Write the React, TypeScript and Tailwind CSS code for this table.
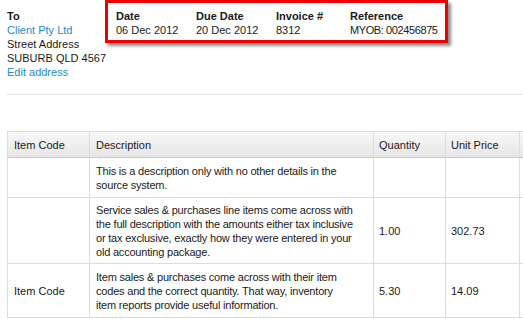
import React from 'react';

interface LineItem {
  code: string;
  description: React.ReactNode;
  quantity: string;
  unitPrice: string;
  height: string;
}

const items: LineItem[] = [
  {
    code: '',
    description: (
      <>
        This is a description only with no other details in the
        <br />
        source system.
      </>
    ),
    quantity: '',
    unitPrice: '',
    height: 'h-[40px]',
  },
  {
    code: '',
    description: (
      <>
        Service sales &amp; purchases line items come across with
        <br />
        the full description with the amounts either tax inclusive
        <br />
        or tax exclusive, exactly how they were entered in your
        <br />
        old accounting package.
      </>
    ),
    quantity: '1.00',
    unitPrice: '302.73',
    height: 'h-[66px]',
  },
  {
    code: 'Item Code',
    description: (
      <>
        Item sales &amp; purchases come across with their item
        <br />
        codes and the correct quantity. That way, inventory
        <br />
        item reports provide useful information.
      </>
    ),
    quantity: '5.30',
    unitPrice: '14.09',
    height: 'h-[54px]',
  },
];

const HeaderField = ({
  label,
  value,
  width,
  tight = false,
}: {
  label: string;
  value: string;
  width: string;
  tight?: boolean;
}) => (
  <div className={`${width} shrink-0 whitespace-nowrap`}>
    <div className="font-bold">{label}</div>
    <div className={tight ? 'tracking-[-0.4px]' : ''}>{value}</div>
  </div>
);

const cell = 'border border-[#dcdcdc] align-middle';

export default function App() {
  return (
    <div
      className="w-[523px] h-[319px] overflow-hidden bg-white text-[11px] leading-[14px] text-[#1a1a1a]"
      style={{ fontFamily: '"Liberation Sans", Arial, sans-serif' }}
    >
      <div className="flex pl-[7px]">
        {/* Bill-to block */}
        <div className="w-[98px] shrink-0 pt-[9px] whitespace-nowrap">
          <div className="font-bold">To</div>
          <div className="text-[#1a8bc8]">Client Pty Ltd</div>
          <div>Street Address</div>
          <div>SUBURB QLD 4567</div>
          <div className="text-[#1a8bc8]">Edit address</div>
        </div>

        {/* Highlighted invoice details */}
        <div className="h-[43px] w-[343px] shrink-0 border-[3px] border-[#ee0000] pl-[8px] pt-[6px] flex shadow-[3px_3px_3px_rgba(0,0,0,0.45)]">
          <HeaderField label="Date" value="06 Dec 2012" width="w-[80px]" />
          <HeaderField label="Due Date" value="20 Dec 2012" width="w-[80px]" />
          <HeaderField label="Invoice #" value="8312" width="w-[74px]" />
          <HeaderField label="Reference" value="MYOB: 002456875" width="w-[90px]" tight />
        </div>
      </div>

      <div className="ml-[7px] mt-[15px] border-t border-[#e2e2e2]" />

      <table className="ml-[7px] mt-[36px] w-[572px] table-fixed border-collapse">
        <colgroup>
          <col className="w-[82px]" />
          <col className="w-[284px]" />
          <col className="w-[72px]" />
          <col className="w-[74px]" />
          <col className="w-[60px]" />
        </colgroup>
        <thead>
          <tr className="h-[26px] bg-gradient-to-b from-[#f7f7f7] to-[#e5e5e5] text-left">
            <th className={`${cell} border-b-[#c4c9ce] px-[6px] font-normal`}>Item Code</th>
            <th className={`${cell} border-b-[#c4c9ce] px-[6px] font-normal`}>Description</th>
            <th className={`${cell} border-b-[#c4c9ce] px-[5px] font-normal`}>Quantity</th>
            <th className={`${cell} border-b-[#c4c9ce] px-[5px] font-normal`}>Unit Price</th>
            <th className={`${cell} border-b-[#c4c9ce]`}></th>
          </tr>
        </thead>
        <tbody>
          {items.map((item, i) => (
            <tr key={i} className={item.height}>
              <td className={`${cell} px-[6px]`}>{item.code}</td>
              <td className={`${cell} px-[6px] whitespace-nowrap tracking-[-0.2px]`}>{item.description}</td>
              <td className={`${cell} px-[5px]`}>{item.quantity}</td>
              <td className={`${cell} px-[5px]`}>{item.unitPrice}</td>
              <td className={cell}></td>
            </tr>
          ))}
        </tbody>
      </table>
    </div>
  );
}
